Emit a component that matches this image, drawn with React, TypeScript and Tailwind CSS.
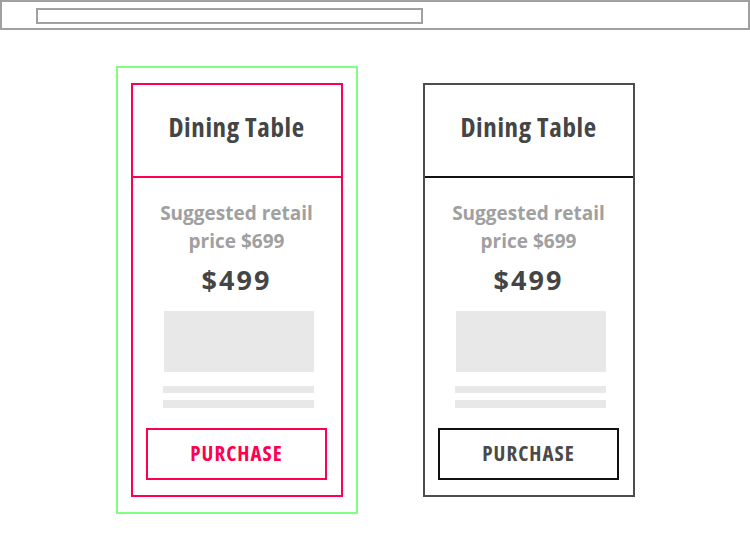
import React from "react";

function Card({ selected }: { selected: boolean }) {
  const border = selected ? "border-[#ff0050]" : "border-[#4d4d4d]";
  const divider = selected ? "border-[#ff0050]" : "border-[#111111]";
  const btn = selected
    ? "border-[#ff0050] text-[#ff0050]"
    : "border-[#111111] text-[#4a4a4a]";
  return (
    <div
      className={`w-[212px] h-[414px] border-2 ${border} flex flex-col bg-white`}
      style={{ fontFamily: '"Open Sans", sans-serif' }}
    >
      <div className={`h-[93px] border-b-2 ${divider} flex items-center justify-center pb-[8px]`}>
        <span
          className="text-[27px] font-bold text-[#454545] leading-none tracking-[0.6px]"
          style={{ fontStretch: "75%" }}
        >
          Dining Table
        </span>
      </div>
      <div className="flex flex-col items-center pt-[21px]">
        <div className="text-[19px] font-bold text-[#a0a0a0] leading-[28px] text-center">
          Suggested retail
          <br />
          price $699
        </div>
        <div className="text-[27px] font-bold text-[#454545] leading-[36px] mt-[7px] tracking-[2px]">
          $499
        </div>
        <div className="w-[150px] h-[61px] bg-[#e8e8e8] mt-[13px] ml-[4px]" />
        <div className="w-[151px] h-[7px] bg-[#e8e8e8] mt-[14px] ml-[4px]" />
        <div className="w-[151px] h-[8px] bg-[#e8e8e8] mt-[7px] ml-[4px]" />
        <div
          className={`w-[181px] h-[52px] border-2 ${btn} mt-[20px] flex items-center justify-center text-[21px] font-bold tracking-[1px]`}
          style={{ fontStretch: "75%" }}
        >
          PURCHASE
        </div>
      </div>
    </div>
  );
}

export default function App() {
  return (
    <div className="w-[750px] h-[550px] bg-white">
      <div className="h-[30px] border-2 border-[#a0a0a0] pl-[34px] pt-[6px]">
        <div className="w-[387px] h-[16px] border-2 border-[#a0a0a0]" />
      </div>
      <div className="flex justify-center items-center gap-[65px] mt-[36px]">
        <div className="border-2 border-[#80ff80] px-[13px] py-[15px]">
          <Card selected={true} />
        </div>
        <Card selected={false} />
      </div>
    </div>
  );
}
